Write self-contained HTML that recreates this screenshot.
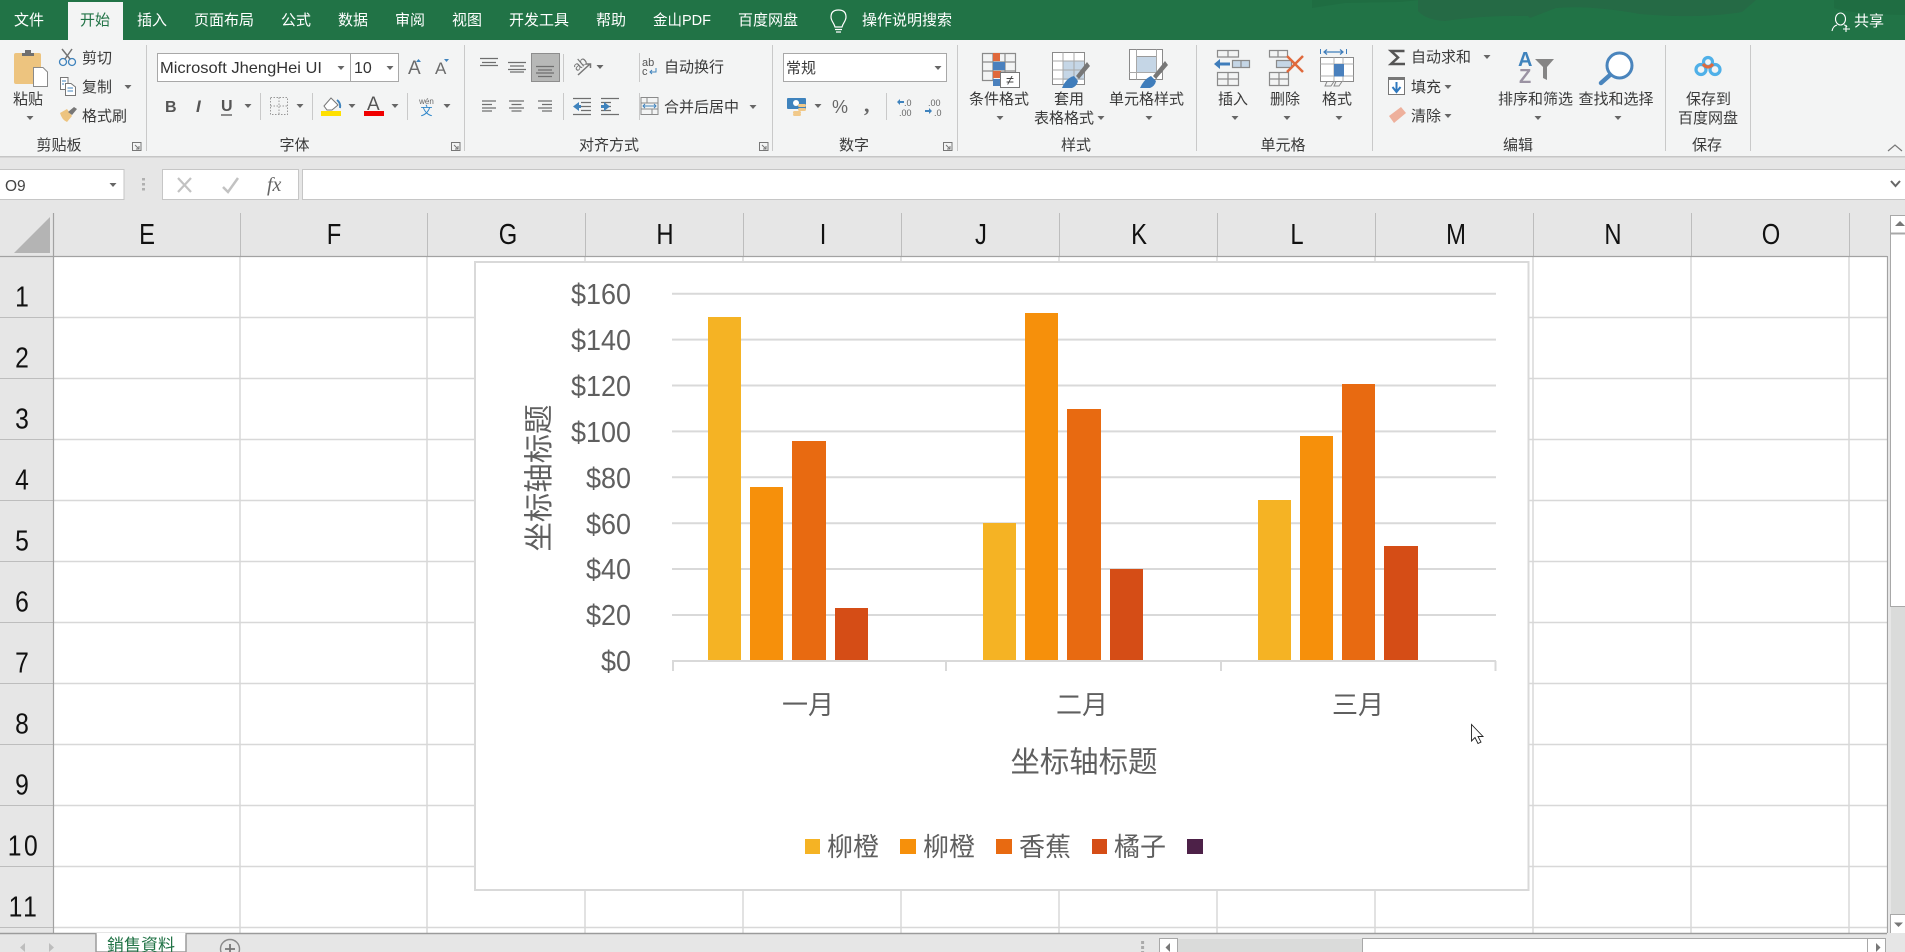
<!DOCTYPE html>
<html lang="zh"><head><meta charset="utf-8"><title>Excel</title>
<style>
html,body{margin:0;padding:0;background:#e6e6e6;width:1905px;height:952px;overflow:hidden}
svg{display:block;position:absolute;left:0;top:0}
text{font-family:"Liberation Sans","Noto Sans CJK SC",sans-serif}
.tab{font-size:15px;fill:#fff}
.t{font-size:15px;fill:#3a3a3a}
.m{text-anchor:middle}
.h{font-size:29px;fill:#111;text-anchor:middle}
.ax{font-size:29px;fill:#5f5f5f;text-anchor:end}
.cat{font-size:26px;fill:#5f5f5f;text-anchor:middle}
.ttl{font-size:29.400px;fill:#5f5f5f;text-anchor:middle}
.ln{stroke:#8a8a8a;fill:none;stroke-width:1.2}
.al{stroke:#6f6f6f;stroke-width:1.2;fill:none}
.sep{stroke:#c9c9c9;stroke-width:1}
.g{stroke:#d8d8d8;stroke-width:1.5}
.hs{stroke:#bdbdbd;stroke-width:1}
.gl{stroke:#d9d9d9;stroke-width:2}
.serif{font-family:"Liberation Serif",serif}
</style></head><body>
<svg width="1905" height="952" viewBox="0 0 1905 952" xmlns="http://www.w3.org/2000/svg">
<defs><path id="a" d="M-3.5-2H3.5L0 2z" fill="#666"/></defs>

<!-- title bar -->
<rect width="1905" height="40" fill="#217346"/>
<path d="M1312 0V8L1345 3L1400 2L1420 0Z" fill="#1f6d42"/>
<path d="M1418 0V11Q1426 20 1445 21Q1485 15 1528 16L1530 18L1556 8Q1590 5 1640 14Q1700 19 1742 12L1756 0Z" fill="#256a45"/>
<path d="M1834 0V8Q1850 14 1905 15V0Z" fill="#1f6d42"/>
<rect x="68" y="2" width="55" height="38" fill="#f3f4f4"/>
<text class="tab" x="14" y="25">文件</text>
<text class="tab" x="80" y="25" style="fill:#217346">开始</text>
<text class="tab" x="137" y="25">插入</text>
<text class="tab" x="194" y="25">页面布局</text>
<text class="tab" x="281" y="25">公式</text>
<text class="tab" x="338" y="25">数据</text>
<text class="tab" x="395" y="25">审阅</text>
<text class="tab" x="452" y="25">视图</text>
<text class="tab" x="509" y="25">开发工具</text>
<text class="tab" x="596" y="25">帮助</text>
<text class="tab" x="653" y="25" textLength="58" lengthAdjust="spacingAndGlyphs">金山PDF</text>
<text class="tab" x="738" y="25">百度网盘</text>
<path d="M835 27C834 23 831 21 831 17C831 12 834 10 838.500 10C843 10 846 12 846 17C846 21 843 23 842 27ZM835 29.500H842M836 32H841" fill="none" stroke="#fff" stroke-width="1.200"/>
<text class="tab" x="862" y="25">操作说明搜索</text>
<ellipse cx="1840.500" cy="19" rx="5" ry="6" fill="none" stroke="#fff" stroke-width="1.100"/>
<path d="M1832 31Q1833 26 1837 25M1844 25Q1846 25 1847 27M1846 25V32M1843 29H1850" fill="none" stroke="#fff" stroke-width="1.100"/>
<text class="tab" x="1854" y="26">共享</text>

<!-- ribbon -->
<rect y="40" width="1905" height="116" fill="#f3f4f4"/>
<rect y="156" width="1905" height="1.500" fill="#c6c6c6"/>
<g class="sep">
<path d="M146.500 45V151M464.500 45V151M772.500 45V151M957.500 45V151M1196.500 45V151M1372.500 45V151M1665.500 45V151M1750.500 45V151"/>
<path d="M260.500 93V120M312.500 93V120M407.500 93V120M563.500 54V82M563.500 93V120M639.500 53V82M639.500 93V120M886.500 93V120"/>
</g>
<g class="t m">
<text x="59" y="150" class="t m">剪贴板</text><text x="294.500" y="150" class="t m">字体</text><text x="609" y="150" class="t m">对齐方式</text><text x="854" y="150" class="t m">数字</text><text x="1076" y="150" class="t m">样式</text><text x="1283" y="150" class="t m">单元格</text><text x="1518" y="150" class="t m">编辑</text><text x="1707" y="150" class="t m">保存</text>
</g>
<g fill="none" stroke="#777" stroke-width="1">
<path d="M132.500 142.500H141V150.500H132.500ZM135 145L139 149M139 146V149H136"/>
<path d="M451.500 142.500H460V150.500H451.500ZM454 145L458 149M458 146V149H455"/>
<path d="M759.500 142.500H768V150.500H759.500ZM762 145L766 149M766 146V149H763"/>
<path d="M943.500 142.500H952V150.500H943.500ZM946 145L950 149M950 146V149H947"/>
<path d="M1888 151L1895 145L1902 151" stroke-width="1.200"/>
</g>

<!-- clipboard -->
<rect x="14" y="53" width="27" height="31" rx="2" fill="#edc47f"/>
<path d="M22 56V53H25V50H31V53H34V56Z" fill="#6f6f6f"/>
<path d="M33.500 67.500H43L47.500 72V86.500H33.500Z" fill="#fff" stroke="#8a8a8a"/>
<text class="t m" x="28" y="104">粘贴</text>
<use href="#a" x="30" y="118"/>
<g fill="none" stroke="#3f83bd" stroke-width="1.300"><circle cx="63" cy="62" r="3.500"/><circle cx="72" cy="62" r="3.500"/></g>
<path d="M65 59L72 49M70 59L62 49" stroke="#757575" stroke-width="1.500" fill="none"/>
<text class="t" x="82" y="63">剪切</text>
<path d="M60.500 77.500H68V89.500H60.500Z" fill="#fff" stroke="#777"/>
<path d="M65.500 83.500H71L75.500 87V95.500H65.500Z" fill="#fff" stroke="#777"/>
<path d="M62 81H66M62 84H64M67.500 88H73M67.500 91H73" stroke="#3f83bd"/>
<text class="t" x="82" y="92">复制</text>
<use href="#a" x="128" y="87"/>
<path d="M60 113L67 109L72 116L67 122Q62 120 60 113Z" fill="#edc47f"/>
<path d="M68 112L74 107L77 109L72 115Z" fill="#777"/>
<text class="t" x="82" y="121">格式刷</text>

<!-- font -->
<rect x="157.500" y="53.500" width="193" height="28" fill="#fff" stroke="#a8a8a8"/>
<rect x="350.500" y="53.500" width="48" height="28" fill="#fff" stroke="#a8a8a8"/>
<text x="160" y="73" font-size="16" fill="#333" textLength="162" lengthAdjust="spacingAndGlyphs">Microsoft JhengHei UI</text>
<text x="354" y="73" font-size="16" fill="#333">10</text>
<use href="#a" x="341" y="68"/><use href="#a" x="390" y="68"/>
<text x="408" y="74" font-size="19" fill="#6b6b6b">A</text>
<path d="M416 62L418.500 59L421 62Z" fill="#3f83bd"/>
<text x="435" y="74" font-size="17" fill="#6b6b6b">A</text>
<path d="M444 59L446.500 62L449 59Z" fill="#3f83bd"/>
<text x="165" y="112" font-size="16" font-weight="bold" fill="#555">B</text>
<text x="196" y="112" font-size="17" font-style="italic" fill="#555" font-weight="bold">I</text>
<text x="221" y="111" font-size="16" fill="#555" font-weight="bold">U</text>
<path d="M221 115H232" stroke="#555" stroke-width="1.300"/>
<use href="#a" x="248" y="106"/>
<path d="M270.500 97.500H287.500V114.500H270.500ZM279 97.500V114.500M270.500 106H287.500" fill="none" stroke="#999" stroke-dasharray="1.500 1.500"/>
<use href="#a" x="300" y="106"/>
<path d="M324 106L331 98L338 105L332 110H327Z" fill="#fff" stroke="#777"/>
<path d="M337 100Q341 103 340 108" stroke="#3f83bd" stroke-width="2" fill="none"/>
<rect x="321" y="111" width="20" height="5" fill="#ffe000"/>
<use href="#a" x="352" y="106"/>
<text x="367" y="110" font-size="19" fill="#555">A</text>
<rect x="364" y="111" width="20" height="5" fill="#f00000"/>
<use href="#a" x="395" y="106"/>
<text x="426.500" y="104" font-size="8" fill="#666" style="text-anchor:middle">wén</text>
<text x="426.500" y="115" font-size="12" fill="#2f86c9" style="text-anchor:middle">文</text>
<use href="#a" x="447" y="106"/>

<!-- alignment -->
<g class="al">
<path d="M480 58.500H498M482 62.500H496M480 65.500H498"/>
<path d="M508 62.500H526M510 66H524M508 69.500H526M510 72H524"/>
</g>
<rect x="531.500" y="53.500" width="28" height="28" fill="#b7b8b7" stroke="#8d8d8d"/>
<g class="al"><path d="M536 66.500H554M538 70H552M536 73H554M538 76.500H552"/></g>
<text x="580" y="68" font-size="13" fill="#777" text-anchor="middle" style="text-anchor:middle" transform="rotate(-40 580 64)">ab</text>
<path d="M578 75L590 64M586 64H590.500V68" fill="none" stroke="#777" stroke-width="1.500"/>
<use href="#a" x="600" y="67"/>
<g class="al">
<path d="M482 101H496M482 104.500H492M482 108H496M482 111H492"/>
<path d="M509 101H524M511.500 104.500H521.500M509 108H524M511.500 111H521.500"/>
<path d="M538 101H552M542 104.500H552M538 108H552M542 111H552"/>
<path d="M573 98.500H591M581 102.500H591M581 106.500H591M581 110.500H591M573 114.500H591"/>
<path d="M601 98.500H619M601 102.500H611M601 106.500H611M601 110.500H611M601 114.500H619"/>
</g>
<path d="M573 106.500L579 102V111ZM579 105H581V108H579Z" fill="#3f83bd"/>
<path d="M610 106.500L604 102V111ZM601 105H604V108H601Z" fill="#3f83bd"/>
<text x="642" y="66" font-size="11" fill="#555">ab</text><text x="642" y="75" font-size="11" fill="#555">c</text>
<path d="M656 68V72H650M652 70L650 72L652 74" fill="none" stroke="#3f83bd"/>
<text class="t" x="664" y="72">自动换行</text>
<path d="M641 97.500H658V114.500H641ZM641 103H658M641 109H658M647 97.500V103M652 109V114.500" fill="none" stroke="#8a8a8a" stroke-width="1"/>
<rect x="643" y="103.500" width="14" height="5" fill="#f3f4f4"/>
<path d="M643 106H656M645 104L643 106L645 108M654 104L656 106L654 108" fill="none" stroke="#3f83bd"/>
<text class="t" x="664" y="112">合并后居中</text>
<use href="#a" x="753" y="107"/>

<!-- number -->
<rect x="783.500" y="53.500" width="163" height="28" fill="#fff" stroke="#a8a8a8"/>
<text class="t" x="786" y="73">常规</text>
<use href="#a" x="938" y="68"/>
<rect x="787" y="98" width="19" height="11" rx="1" fill="#3f83bd"/>
<circle cx="796" cy="103" r="3" fill="#fff"/>
<g fill="#f1c98a"><rect x="798" y="104" width="8" height="3" rx="1.500"/><rect x="798" y="108" width="8" height="3" rx="1.500"/><rect x="793" y="111" width="8" height="3" rx="1.500"/><rect x="793" y="113.500" width="8" height="2.500" rx="1.200"/></g>
<use href="#a" x="818" y="106"/>
<text x="832" y="113" font-size="18" fill="#666">%</text>
<text x="864" y="112" font-size="22" fill="#666" font-weight="bold" class="serif">,</text>
<text x="904" y="106" font-size="9" fill="#666">.0</text><text x="899" y="116" font-size="9" fill="#666">.00</text>
<path d="M897 102L900 99V101H904V103H900V105Z" fill="#3f83bd"/>
<text x="928" y="106" font-size="9" fill="#666">.00</text><text x="934" y="116" font-size="9" fill="#666">.0</text>
<path d="M932 111L929 108V110H925V112H929V114Z" fill="#3f83bd"/>

<!-- styles -->
<path d="M982.500 53.500H1015.500V80.500H982.500ZM982.500 62H1015.500M982.500 71H1015.500M993 53.500V80.500M1005 53.500V80.500" class="ln" fill="#fff"/>
<rect x="993" y="53" width="7" height="8" fill="#e0693c"/><rect x="993" y="62" width="12" height="8" fill="#4a80bd"/><rect x="993" y="71" width="8" height="7" fill="#e0693c"/><rect x="993" y="79" width="7" height="7" fill="#4a80bd"/>
<rect x="1000.500" y="72.500" width="19" height="15" fill="#fff" stroke="#777"/>
<text x="1010" y="85" font-size="14" fill="#444" style="text-anchor:middle">≠</text>
<text class="t m" x="999" y="104">条件格式</text><use href="#a" x="1000" y="118"/>
<rect x="1052.500" y="52.500" width="32" height="32" fill="#fff" stroke="#8a8a8a"/>
<rect x="1063" y="61" width="21" height="19" fill="#c5d6e6"/>
<path d="M1052.500 61H1084.500M1052.500 70H1084.500M1052.500 79H1084.500M1063 52.500V84.500M1074 52.500V84.500" stroke="#a8a8a8" fill="none"/>
<path d="M1087 62L1076 76L1079 79L1090 66Z" fill="#777"/>
<path d="M1062 88Q1066 78 1074 76L1078 81Q1077 86 1072 88Z" fill="#3f7dbb"/>
<text class="t m" x="1069" y="104">套用</text><text class="t m" x="1064" y="123">表格格式</text><use href="#a" x="1101" y="118"/>
<rect x="1129.500" y="49.500" width="33" height="30" fill="#fff" stroke="#8a8a8a"/>
<rect x="1136.500" y="56.500" width="20" height="16" fill="#c5d6e6" stroke="#9a9a9a"/>
<path d="M1129.500 72.500H1162.500M1136.500 49.500V79.500M1156.500 49.500V79.500" stroke="#a8a8a8" fill="none"/>
<path d="M1165 61L1153 76L1156 79L1168 65Z" fill="#777"/>
<path d="M1140 88Q1144 79 1151 76L1156 81Q1155 86 1150 88Z" fill="#3f7dbb"/>
<text class="t m" x="1146.500" y="104">单元格样式</text><use href="#a" x="1149" y="118"/>

<!-- cells -->
<g class="ln">
<path d="M1217.500 50.500H1238.500V57H1217.500ZM1228 50.500V57"/>
<path d="M1232.500 60.500H1249.500V67.500H1232.500ZM1241 60.500V67.500" style="fill:#c5d6e6"/>
<path d="M1217.500 72.500H1238.500V85.500H1217.500ZM1217.500 79H1238.500M1228 72.500V85.500"/>
<path d="M1269.500 50.500H1287.500V57H1269.500ZM1278 50.500V57"/>
<path d="M1276.500 60.500H1291.500V67.500H1276.500Z" style="fill:#c5d6e6"/>
<path d="M1269.500 72.500H1288.500V85.500H1269.500ZM1269.500 79H1288.500M1279 72.500V85.500"/>
</g>
<path d="M1214 64L1220 59V62.500H1230V65.500H1220V69Z" fill="#3f7dbb"/>
<path d="M1287 56L1303 72M1303 56L1287 72" stroke="#e0693c" stroke-width="2.500"/>
<text class="t m" x="1233" y="104">插入</text><use href="#a" x="1235" y="118"/>
<text class="t m" x="1285" y="104">删除</text><use href="#a" x="1287" y="118"/>
<path d="M1320.500 49V54M1346.500 49V54" stroke="#3f7dbb"/>
<path d="M1324 52H1343M1327 49.500L1324 52L1327 54.500M1340 49.500L1343 52L1340 54.500" stroke="#3f7dbb" stroke-width="1.200" fill="none"/>
<rect x="1320.500" y="57.500" width="33" height="24" fill="#fff" stroke="#8a8a8a"/>
<path d="M1320.500 64H1353.500M1320.500 76H1353.500M1334 57.500V81.500M1343 57.500V81.500" stroke="#b0b0b0" fill="none"/>
<rect x="1334" y="64" width="10" height="12.500" fill="#4a80bd"/>
<path d="M1327 81.500L1325 86H1331L1334 81.500M1336 81.500L1334 86H1339L1342 81.500" fill="none" stroke="#8a8a8a"/>
<text class="t m" x="1337" y="104">格式</text><use href="#a" x="1339" y="118"/>

<!-- edit -->
<path d="M1404.500 51H1391L1398 57.500L1391 64H1405" fill="none" stroke="#555" stroke-width="2.500"/>
<text class="t" x="1411" y="62">自动求和</text><use href="#a" x="1487" y="57"/>
<rect x="1388.500" y="77.500" width="16" height="17" fill="#fff" stroke="#777"/>
<rect x="1388" y="77" width="17" height="3" fill="#777"/>
<path d="M1396.500 82V91M1392.500 87L1396.500 92L1400.500 87" fill="none" stroke="#2f79bf" stroke-width="2"/>
<text class="t" x="1411" y="92">填充</text><use href="#a" x="1448" y="87"/>
<path d="M1389 116L1401 107L1406 113L1394 123Z" fill="#eeb09c"/>
<text class="t" x="1411" y="121">清除</text><use href="#a" x="1448" y="116"/>
<text x="1518" y="66" font-size="20" font-weight="bold" fill="#3f83bd">A</text>
<text x="1519" y="83" font-size="20" font-weight="bold" fill="#9b93a3">Z</text>
<path d="M1535 59H1554L1547 67V80L1543 78V67Z" fill="#858585"/>
<text class="t m" x="1535.500" y="104">排序和筛选</text><use href="#a" x="1538" y="118"/>
<circle cx="1619.500" cy="65.500" r="12.500" fill="#fff" stroke="#4a85bd" stroke-width="3"/>
<path d="M1610 75L1601 83" stroke="#4a85bd" stroke-width="4.500" stroke-linecap="round"/>
<text class="t m" x="1616" y="104">查找和选择</text><use href="#a" x="1618" y="118"/>
<g fill="none" stroke-width="3.200"><circle cx="1701" cy="69.500" r="5" stroke="#4fb0e8"/><circle cx="1715" cy="69.500" r="5" stroke="#4fb0e8"/><circle cx="1708" cy="62" r="4.500" stroke="#4fb0e8"/><path d="M1703 64Q1708 70 1713 64" stroke="#e0693c"/></g>
<text class="t m" x="1708.500" y="104">保存到</text><text class="t m" x="1708" y="123">百度网盘</text>

<!-- formula bar -->
<rect x="-1" y="169.500" width="125" height="30" fill="#fff" stroke="#c6c6c6"/>
<text x="5" y="191" font-size="15.500" fill="#444">O9</text>
<use href="#a" x="113" y="185"/>
<path d="M143.500 178V180.500M143.500 183V185.500M143.500 188V190.500" stroke="#b0b0b0" stroke-width="3"/>
<rect x="162.500" y="169.500" width="136" height="30" fill="#fff" stroke="#c6c6c6"/>
<path d="M178 178L191 192M191 178L178 192" stroke="#c2c2c2" stroke-width="2.200"/>
<path d="M223 187L228 192L238 178" stroke="#c2c2c2" stroke-width="2.500" fill="none"/>
<text x="267" y="191" font-size="20" font-style="italic" fill="#666" class="serif">fx</text>
<rect x="302.500" y="169.500" width="1610" height="30" fill="#fff" stroke="#c6c6c6"/>
<path d="M1891 181L1895.500 186L1900 181" fill="none" stroke="#666" stroke-width="2"/>

<!-- grid -->
<rect x="53" y="256" width="1834" height="677" fill="#fff"/>
<path d="M14 253L50 217V253Z" fill="#b4b4b4"/>
<g class="g">
<path d="M240 256V933M427 256V933M585 256V933M743 256V933M901 256V933M1059 256V933M1217 256V933M1375 256V933M1533 256V933M1691 256V933M1849 256V933"/>
<path d="M53 317.500H1887M53 378.500H1887M53 439.500H1887M53 500.500H1887M53 561.500H1887M53 622.500H1887M53 683.500H1887M53 744.500H1887M53 805.500H1887M53 866.500H1887M53 927.500H1887"/>
</g>
<g class="hs">
<path d="M240.500 213V256M427.500 213V256M585.500 213V256M743.500 213V256M901.500 213V256M1059.500 213V256M1217.500 213V256M1375.500 213V256M1533.500 213V256M1691.500 213V256M1849.500 213V256"/>
<path d="M0 317.500H53M0 378.500H53M0 439.500H53M0 500.500H53M0 561.500H53M0 622.500H53M0 683.500H53M0 744.500H53M0 805.500H53M0 866.500H53M0 927.500H53"/>
</g>
<path d="M53.500 213V933M0 256.500H1887M1887.500 256V933" stroke="#a2a2a2" stroke-width="1.200" fill="none"/>

<g>
<text class="h" transform="translate(147 244) scale(.82 1)">E</text>
<text class="h" transform="translate(334 244) scale(.82 1)">F</text>
<text class="h" transform="translate(508 244) scale(.82 1)">G</text>
<text class="h" transform="translate(665 244) scale(.82 1)">H</text>
<text class="h" transform="translate(823 244) scale(.82 1)">I</text>
<text class="h" transform="translate(981 244) scale(.82 1)">J</text>
<text class="h" transform="translate(1139 244) scale(.82 1)">K</text>
<text class="h" transform="translate(1297 244) scale(.82 1)">L</text>
<text class="h" transform="translate(1456 244) scale(.82 1)">M</text>
<text class="h" transform="translate(1613 244) scale(.82 1)">N</text>
<text class="h" transform="translate(1771 244) scale(.82 1)">O</text>
<text class="h" transform="translate(22 306.700) scale(.85 1)">1</text>
<text class="h" transform="translate(22 367.700) scale(.85 1)">2</text>
<text class="h" transform="translate(22 428.700) scale(.85 1)">3</text>
<text class="h" transform="translate(22 489.700) scale(.85 1)">4</text>
<text class="h" transform="translate(22 550.700) scale(.85 1)">5</text>
<text class="h" transform="translate(22 611.700) scale(.85 1)">6</text>
<text class="h" transform="translate(22 672.700) scale(.85 1)">7</text>
<text class="h" transform="translate(22 733.700) scale(.85 1)">8</text>
<text class="h" transform="translate(22 794.700) scale(.85 1)">9</text>
<text class="h" transform="translate(24 855.700) scale(.85 1)" letter-spacing="3">10</text>
<text class="h" transform="translate(24 916.700) scale(.85 1)" letter-spacing="3">11</text>
</g>

<!-- chart -->
<rect x="475" y="262" width="1053.500" height="628" fill="#fff" stroke="#d9d9d9" stroke-width="2"/>
<path class="gl" d="M672 293.700H1496M672 339.600H1496M672 385.500H1496M672 431.400H1496M672 477.300H1496M672 523.200H1496M672 569H1496M672 615H1496"/>
<path class="gl" fill="none" d="M672 661H1496M673 661V671M946 661V671M1221 661V671M1495.500 661V671"/>
<g fill="#f5b324"><rect x="708" y="317" width="33" height="343"/><rect x="983" y="523" width="33" height="137"/><rect x="1258" y="500" width="33" height="160"/></g>
<g fill="#f6900b"><rect x="750" y="487" width="33" height="173"/><rect x="1025" y="313" width="33" height="347"/><rect x="1300" y="436" width="33" height="224"/></g>
<g fill="#e86a11"><rect x="792" y="441" width="34" height="219"/><rect x="1067" y="409" width="34" height="251"/><rect x="1342" y="384" width="33" height="276"/></g>
<g fill="#d54d16"><rect x="835" y="608" width="33" height="52"/><rect x="1110" y="569" width="33" height="91"/><rect x="1384" y="546" width="34" height="114"/></g>
<text class="ax" transform="translate(631 304) scale(.93 1)">$160</text>
<text class="ax" transform="translate(631 350) scale(.93 1)">$140</text>
<text class="ax" transform="translate(631 396) scale(.93 1)">$120</text>
<text class="ax" transform="translate(631 442) scale(.93 1)">$100</text>
<text class="ax" transform="translate(631 488) scale(.93 1)">$80</text>
<text class="ax" transform="translate(631 534) scale(.93 1)">$60</text>
<text class="ax" transform="translate(631 579) scale(.93 1)">$40</text>
<text class="ax" transform="translate(631 625) scale(.93 1)">$20</text>
<text class="ax" transform="translate(631 671) scale(.93 1)">$0</text>
<text class="ttl" transform="translate(549 478) rotate(-90)">坐标轴标题</text>
<text class="ttl" x="1084" y="772">坐标轴标题</text>
<text class="cat" x="808" y="714">一月</text>
<text class="cat" x="1082" y="714">二月</text>
<text class="cat" x="1358" y="714">三月</text>
<rect x="805" y="839" width="15" height="15" fill="#f5b324"/><text class="cat" x="853" y="856">柳橙</text>
<rect x="900" y="839" width="16" height="15" fill="#f6900b"/><text class="cat" x="949" y="856">柳橙</text>
<rect x="996" y="839" width="16" height="15" fill="#e86a11"/><text class="cat" x="1045" y="856">香蕉</text>
<rect x="1092" y="839" width="15" height="15" fill="#d54d16"/><text class="cat" x="1140" y="856">橘子</text>
<rect x="1187" y="839" width="16" height="15" fill="#4d2148"/>
<path d="M1471.500 724.500V741L1475 737.500L1478 743.500L1481 742L1478 736.500H1483Z" fill="#fff" stroke="#222" stroke-width=".9"/>

<!-- vertical scrollbar -->
<rect x="1888" y="200" width="17" height="733" fill="#e6e6e6"/>
<rect x="1891" y="607" width="14" height="326" fill="#dadbda"/>
<rect x="1890.500" y="215.500" width="16" height="391" fill="#fff" stroke="#a8a8a8"/>
<path d="M1890.500 233.500H1905" stroke="#a8a8a8" stroke-width="2"/>
<path d="M1895 226L1900 221L1905 226Z" fill="#777"/>
<rect x="1890.500" y="914.500" width="16" height="19" fill="#fff" stroke="#a8a8a8"/>
<path d="M1894 922.500H1903L1898.500 927Z" fill="#777"/>

<!-- bottom bar -->
<rect y="933" width="1905" height="19" fill="#e6e6e6"/>
<path d="M0 933.500H1887" stroke="#9b9b9b" stroke-width="1.500"/>
<path d="M96 933V952H186V933" fill="#fff" stroke="#9b9b9b" stroke-width="1.500"/>
<rect x="96.800" y="933" width="88.500" height="2" fill="#fff"/>
<text x="107" y="951" font-size="17" fill="#217346" style="font-family:'Liberation Sans','Noto Sans CJK TC',sans-serif">銷售資料</text>
<path d="M25 943V952L20 947.500ZM49 943V952L54 947.500Z" fill="#bdbdbd"/>
<circle cx="230" cy="949" r="9.500" fill="none" stroke="#8a8a8a" stroke-width="1.400"/>
<path d="M225 949H235M230 944V954" stroke="#777" stroke-width="1.800"/>
<path d="M1142.600 941V944M1142.600 946V949M1142.600 951V952" stroke="#aaa" stroke-width="3"/>
<rect x="1159.500" y="938.500" width="18" height="16" fill="#fff" stroke="#a8a8a8"/>
<path d="M1170 943V952L1165.500 947.500Z" fill="#777"/>
<rect x="1178" y="939" width="184" height="13" fill="#dadbda"/>
<rect x="1362.500" y="938.500" width="505" height="16" fill="#fff" stroke="#a8a8a8"/>
<rect x="1867.500" y="938.500" width="18" height="16" fill="#fff" stroke="#a8a8a8"/>
<path d="M1876 943V952L1880.500 947.500Z" fill="#777"/>
</svg>
</body></html>
